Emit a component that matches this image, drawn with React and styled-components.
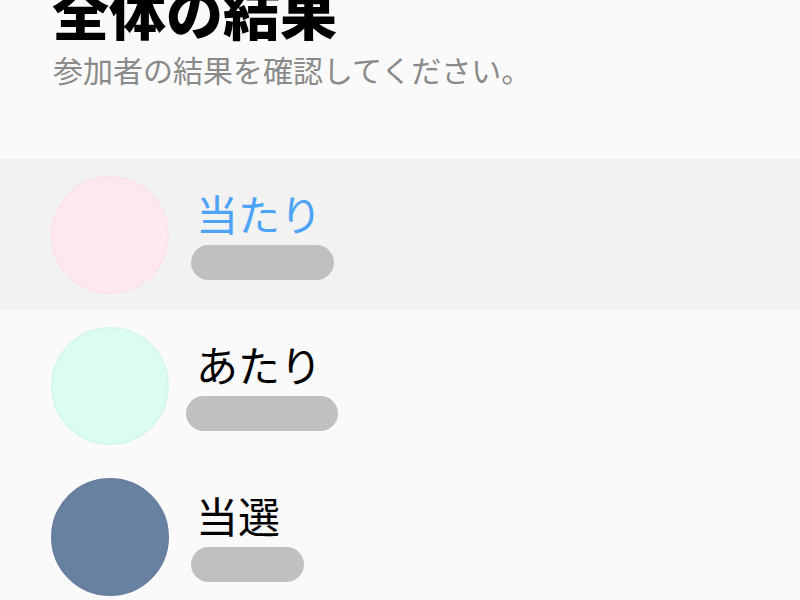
import React from "react";
import styled, { createGlobalStyle } from "styled-components";

const GlobalStyle = createGlobalStyle`
  html, body {
    margin: 0;
    padding: 0;
    background: #fafafa;
    font-family: "Noto Sans CJK JP", "Noto Sans", sans-serif;
    overflow: hidden;
  }
`;

const results = [
  { label: "当たり", color: "#fde9ed", ring: "#fbe3e8", pill: 143, shift: 0, active: true },
  { label: "あたり", color: "#dbfcf0", ring: "#d6f8ea", pill: 152, shift: -5 },
  { label: "当選", color: "#6781a1", ring: "#6a7fa0", pill: 113, shift: 0 },
];

export default function App() {
  return (
    <Page>
      <GlobalStyle />
      <Header>
        <Title>全体の結果</Title>
        <Subtitle>参加者の結果を確認してください。</Subtitle>
      </Header>
      <List>
        {results.map((r) => (
          <Row key={r.label} active={r.active}>
            <Avatar color={r.color} ring={r.ring} />
            <Info>
              <Name active={r.active}>{r.label}</Name>
              <Pill shift={r.shift} style={{ width: r.pill }} />
            </Info>
          </Row>
        ))}
      </List>
    </Page>
  );
}

const Page = styled.div`
  width: 800px;
  height: 600px;
  background: #fafafa;
  overflow: hidden;
`;

const Header = styled.div`
  padding: 0 52px;
  margin-top: -30px;
  height: 189px;
`;

const Title = styled.h1`
  margin: 0;
  font-size: 57px;
  line-height: 80px;
  font-weight: 900;
  color: #000;
`;

const Subtitle = styled.p`
  margin: 0 0 0 1px;
  font-size: 30px;
  line-height: 38px;
  color: #8a8a8a;
`;

const List = styled.div`
  display: flex;
  flex-direction: column;
`;

const Row = styled.div`
  display: flex;
  align-items: center;
  gap: 22px;
  height: 151px;
  padding: 0 51px;
  background: ${(p) => (p.active ? "#f2f2f2" : "transparent")};
`;

const Avatar = styled.div`
  width: 114px;
  height: 114px;
  flex-shrink: 0;
  border-radius: 50%;
  background: ${(p) => p.color};
  border: 2px solid ${(p) => p.ring};
`;

const Info = styled.div`
  display: flex;
  flex-direction: column;
  align-items: flex-start;
`;

const Name = styled.div`
  font-size: 42px;
  line-height: 48px;
  padding-left: 5px;
  margin-bottom: 8px;
  color: ${(p) => (p.active ? "#4da3f5" : "#000")};
`;

const Pill = styled.div`
  height: 35px;
  margin-left: ${(p) => p.shift}px;
  border-radius: 18px;
  background: #c0c0c0;
`;
